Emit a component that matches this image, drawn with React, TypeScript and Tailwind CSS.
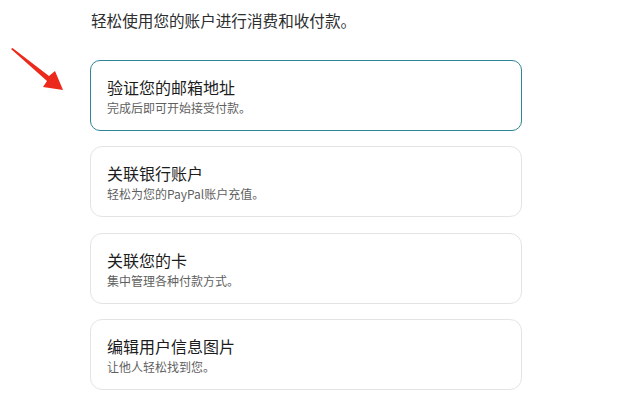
const steps = [
  { title: "验证您的邮箱地址", sub: "完成后即可开始接受付款。", active: true },
  { title: "关联银行账户", sub: "轻松为您的PayPal账户充值。" },
  { title: "关联您的卡", sub: "集中管理各种付款方式。" },
  { title: "编辑用户信息图片", sub: "让他人轻松找到您。" },
];

const font = { fontFamily: '"Noto Sans CJK SC", "Noto Sans", sans-serif' };

export default function App() {
  return (
    <div className="relative w-[634px] h-[394px] bg-white overflow-hidden" style={font}>
      {/* red annotation arrow */}
      <svg className="absolute left-0 top-0" width="80" height="100" viewBox="0 0 80 100">
        <path d="M11 49 L12.5 48 L49 76 L55 71 L63 90 L43 87 L47 81 Z" fill="#ec2a1c" />
      </svg>

      <div className="pl-[91px] pt-[9px]">
        <p className="text-[15.6px] leading-[22px] text-[#2c2e2f]">轻松使用您的账户进行消费和收付款。</p>
      </div>

      <div className="ml-[90px] mt-[29px] w-[432px] flex flex-col gap-[15.3px]">
        {steps.map((s) => (
          <div
            key={s.title}
            className={
              s.active
                ? "h-[71px] rounded-[10px] border border-[#2f8595] bg-white pl-[16px] pt-[16px]"
                : "h-[71px] rounded-[12px] border border-[#e4e4e4] bg-white pl-[16px] pt-[16px]"
            }
          >
            <div className="text-[16px] leading-[21px] text-[#1c1c1c]">{s.title}</div>
            <div className="mt-[2px] text-[12px] leading-[16px] text-[#5f5f5f]">{s.sub}</div>
          </div>
        ))}
      </div>
    </div>
  );
}
